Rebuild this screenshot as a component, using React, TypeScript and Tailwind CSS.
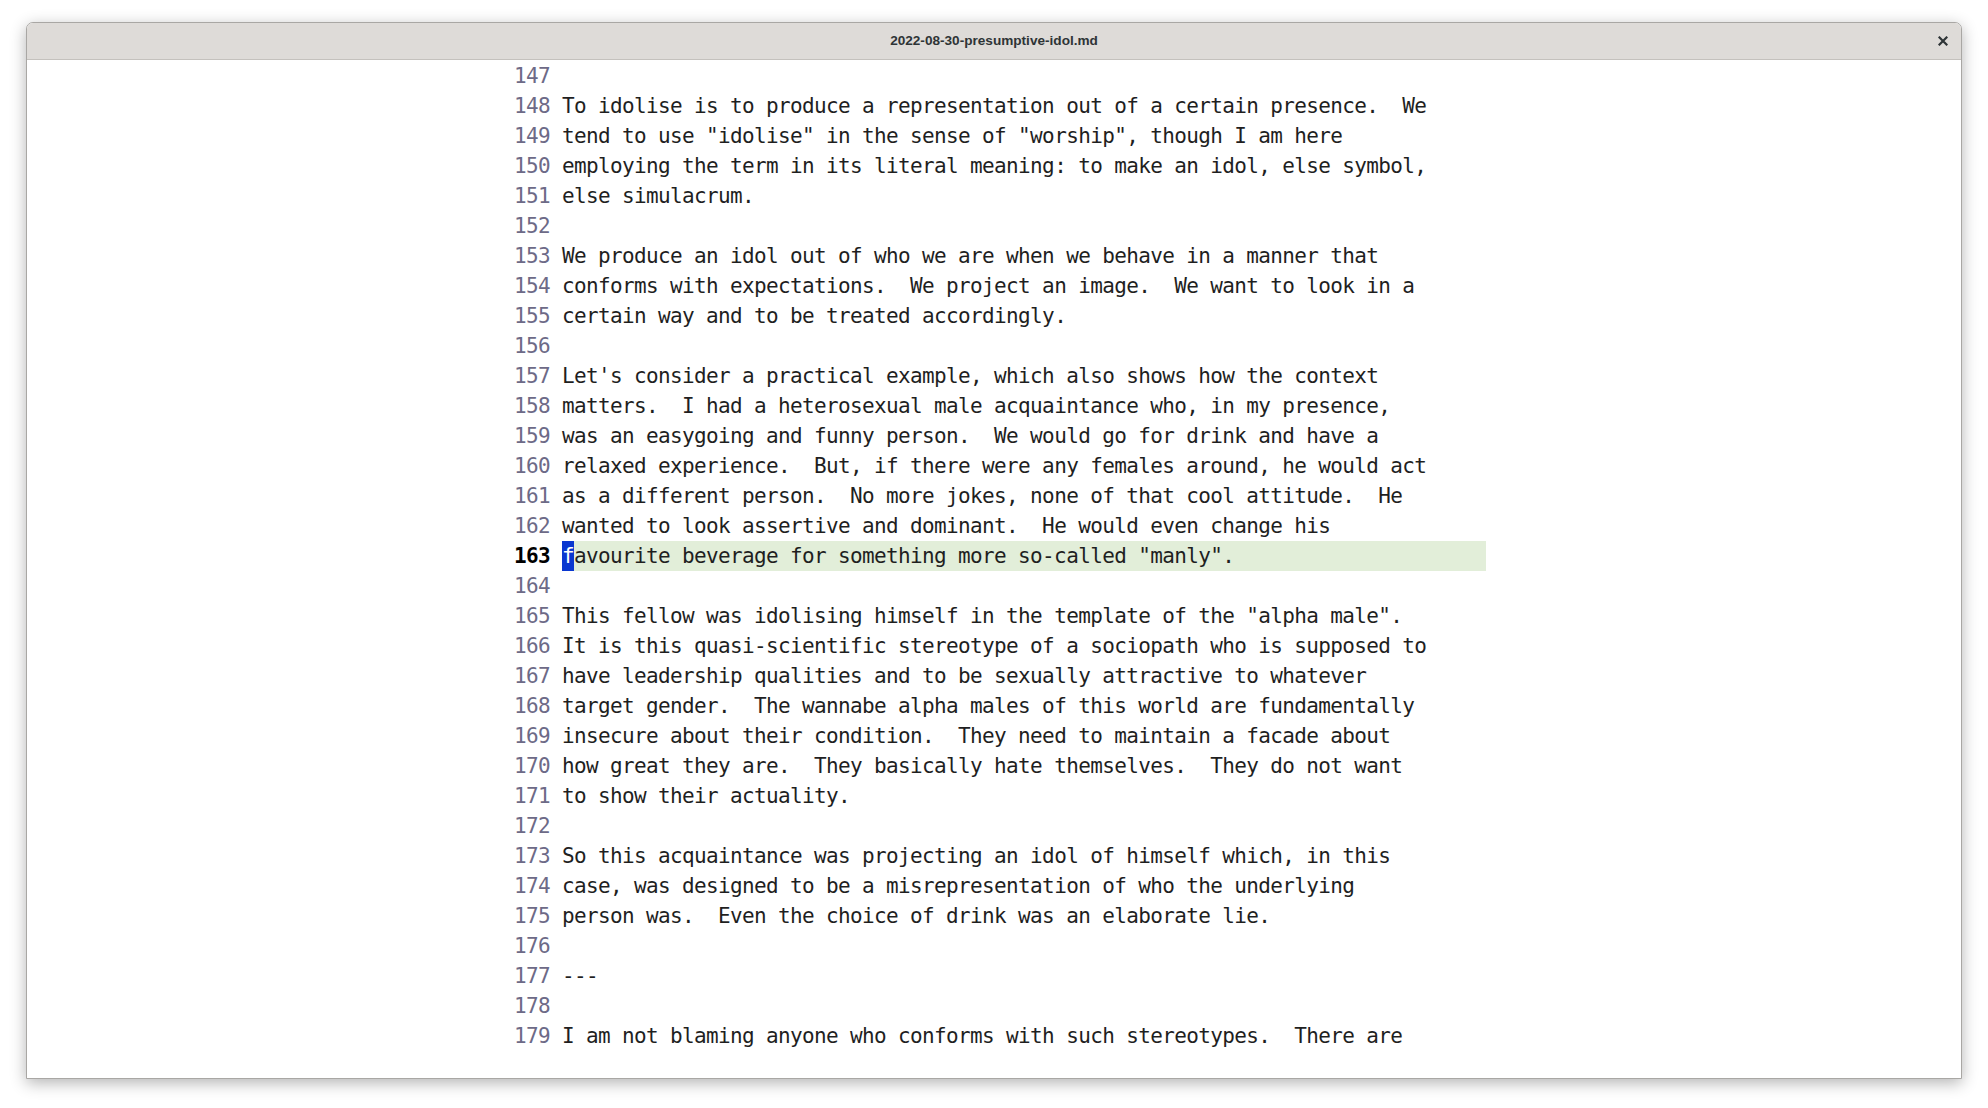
import React from "react";

const lines: [number, string][] = [
  [147, ""],
  [148, "To idolise is to produce a representation out of a certain presence.  We"],
  [149, 'tend to use "idolise" in the sense of "worship", though I am here'],
  [150, "employing the term in its literal meaning: to make an idol, else symbol,"],
  [151, "else simulacrum."],
  [152, ""],
  [153, "We produce an idol out of who we are when we behave in a manner that"],
  [154, "conforms with expectations.  We project an image.  We want to look in a"],
  [155, "certain way and to be treated accordingly."],
  [156, ""],
  [157, "Let's consider a practical example, which also shows how the context"],
  [158, "matters.  I had a heterosexual male acquaintance who, in my presence,"],
  [159, "was an easygoing and funny person.  We would go for drink and have a"],
  [160, "relaxed experience.  But, if there were any females around, he would act"],
  [161, "as a different person.  No more jokes, none of that cool attitude.  He"],
  [162, "wanted to look assertive and dominant.  He would even change his"],
  [163, 'favourite beverage for something more so-called "manly".'],
  [164, ""],
  [165, 'This fellow was idolising himself in the template of the "alpha male".'],
  [166, "It is this quasi-scientific stereotype of a sociopath who is supposed to"],
  [167, "have leadership qualities and to be sexually attractive to whatever"],
  [168, "target gender.  The wannabe alpha males of this world are fundamentally"],
  [169, "insecure about their condition.  They need to maintain a facade about"],
  [170, "how great they are.  They basically hate themselves.  They do not want"],
  [171, "to show their actuality."],
  [172, ""],
  [173, "So this acquaintance was projecting an idol of himself which, in this"],
  [174, "case, was designed to be a misrepresentation of who the underlying"],
  [175, "person was.  Even the choice of drink was an elaborate lie."],
  [176, ""],
  [177, "---"],
  [178, ""],
  [179, "I am not blaming anyone who conforms with such stereotypes.  There are"],
];

const CURRENT = 163;

export default function App() {
  return (
    <div className="w-[1988px] h-[1108px] bg-white pt-[22px] px-[26px] overflow-hidden">
      <div className="h-[1057px] flex flex-col bg-white rounded-t-[7px] border border-[#a9a7a4] shadow-[0_4px_16px_rgba(0,0,0,0.3)] overflow-hidden">
        <header className="relative h-[37px] shrink-0 flex items-center justify-center bg-[#dedbd8] border-b border-[#c4c1bd]">
          <span className="font-['Liberation_Sans',Arial,sans-serif] font-bold text-[13.6px] text-[#2e3436]">
            2022-08-30-presumptive-idol.md
          </span>
          <div className="absolute right-[13px] top-1/2 -translate-y-1/2 w-[10px] h-[10px]">
            <svg width="10" height="10" viewBox="0 0 10 10">
              <path d="M1.5 1.5 L8.5 8.5 M8.5 1.5 L1.5 8.5" stroke="#2e3436" strokeWidth="2.2" strokeLinecap="square" />
            </svg>
          </div>
        </header>
        <main className="flex-1 pl-[487px] pt-[1px] font-['DejaVu_Sans_Mono',monospace] text-[21px] tracking-[-0.64px] leading-[30px]">
          {lines.map(([n, t]) => {
            const cur = n === CURRENT;
            return (
              <div key={n} className="flex h-[30px] whitespace-pre">
                <span
                  className={
                    cur
                      ? "w-[36px] text-right font-bold text-black"
                      : "w-[36px] text-right text-[#6d6a87]"
                  }
                >
                  {n}
                </span>
                <span className="w-[12px]" />
                {cur ? (
                  <span className="flex w-[924px] h-[30px] bg-[#e2eed9] text-[#1f1f1f]">
                    <span className="inline-block w-[12px] h-[30px] bg-[#0a37d0] text-white">{t[0]}</span>
                    <span>{t.slice(1)}</span>
                  </span>
                ) : (
                  <span className="text-[#1f1f1f]">{t}</span>
                )}
              </div>
            );
          })}
        </main>
      </div>
    </div>
  );
}
